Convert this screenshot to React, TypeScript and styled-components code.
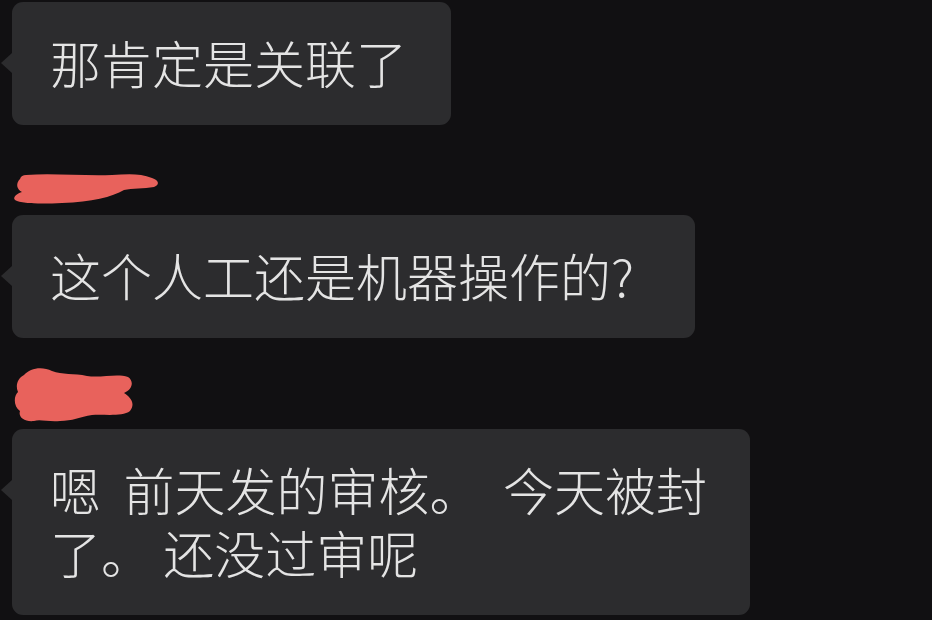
import React from 'react';
import styled, { createGlobalStyle } from 'styled-components';

type MessageData = {
  id: number;
  text: string;
  width?: number;
  nameGap?: number;
  name?: 'short' | 'tall';
};

const GlobalStyle = createGlobalStyle`
  html, body {
    margin: 0;
    padding: 0;
    background: #111012;
  }
  body {
    width: 932px;
    height: 620px;
    overflow: hidden;
    font-family: "Noto Sans CJK SC", "Noto Sans", sans-serif;
  }
`;

const App = () => {
  return (
    <>
      <GlobalStyle />
      <ChatList>
        {MESSAGES.map((item) => (
          <Message key={item.id} nameGap={item.nameGap ?? 0}>
            {item.name === 'short' && <ShortRedaction />}
            {item.name === 'tall' && <TallRedaction />}
            <Bubble fixedWidth={item.width}>
              <Tail />
              {item.text}
            </Bubble>
          </Message>
        ))}
      </ChatList>
    </>
  );
};

// hand drawn red marker over the sender's name
const ShortRedaction = () => (
  <NameMark width={150} height={36} viewBox='0 0 150 36' below={8}>
    <path
      d='M14 4 C40 2 70 5 100 4 C115 3 128 2 140 7 C147 9 148 14 142 16 C132 18 120 17 112 19 C100 26 80 31 50 32 C30 33 10 33 3 29 C0 26 6 22 10 21 C4 18 4 12 8 8 C9 5 11 4 14 4 Z'
      fill='#e8625c'
    />
  </NameMark>
);

const TallRedaction = () => (
  <NameMark width={126} height={56} viewBox='0 0 126 56' below={6}>
    <path
      d='M12 8 C18 1 30 -1 40 4 C50 8 62 6 75 9 C90 11 105 6 116 10 C122 14 121 22 112 26 C118 30 124 36 118 44 C110 50 92 47 80 48 C68 50 60 54 48 54 C36 55 28 52 22 54 C12 55 6 50 8 44 C2 40 1 30 6 25 C3 18 6 11 12 8 Z'
      fill='#e8625c'
    />
  </NameMark>
);

const ChatList = styled.div`
  display: flex;
  flex-direction: column;
  align-items: flex-start;
  padding: 2px 0 0 12px;
`;

const Message = styled.div<{ nameGap: number }>`
  display: flex;
  flex-direction: column;
  align-items: flex-start;
  margin-top: ${(props) => props.nameGap}px;
`;

const NameMark = styled.svg<{ below: number }>`
  display: block;
  margin: 0 0 ${(props) => props.below}px 0;
`;

const Bubble = styled.div<{ fixedWidth?: number }>`
  position: relative;
  box-sizing: border-box;
  width: ${(props) => (props.fixedWidth ? `${props.fixedWidth}px` : 'auto')};
  padding: 29px 44px 31px 38px;
  border-radius: 11px;
  background: #2c2c2e;
  color: #e4e4e4;
  font-size: 51px;
  font-weight: 300;
  line-height: 63px;
  white-space: pre;
`;

const Tail = styled.span`
  position: absolute;
  left: -11px;
  top: 51px;
  width: 0;
  height: 0;
  border-top: 10px solid transparent;
  border-bottom: 10px solid transparent;
  border-right: 11px solid #2c2c2e;
`;

export default App;

const MESSAGES: MessageData[] = [
  { id: 1, text: '那肯定是关联了' },
  {
    id: 2,
    text: '这个人工还是机器操作的?',
    name: 'short',
    nameGap: 46,
    width: 683,
  },
  {
    id: 3,
    text: '嗯  前天发的审核。  今天被封\n了。 还没过审呢',
    name: 'tall',
    nameGap: 29,
    width: 738,
  },
];
